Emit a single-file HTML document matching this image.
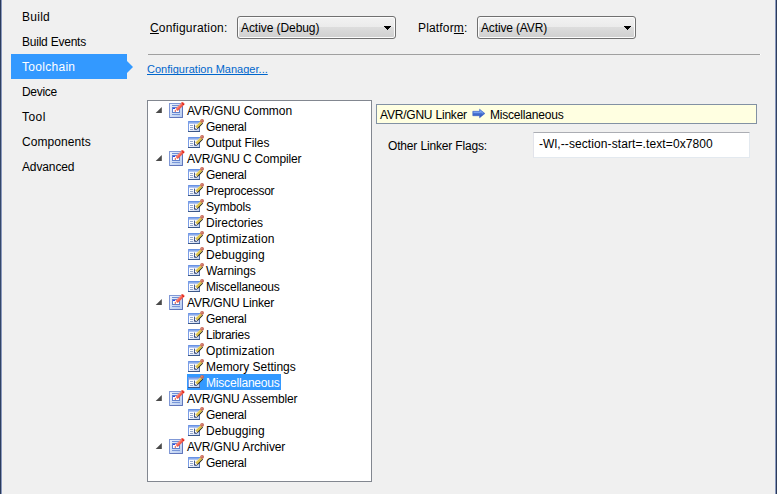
<!DOCTYPE html><html><head><meta charset="utf-8"><title>Toolchain</title><style>
html,body{margin:0;padding:0}
body{width:777px;height:494px;background:#f0f0f0;position:relative;overflow:hidden;font-family:"Liberation Sans",sans-serif;font-size:12px;color:#000;line-height:16px}
.t{position:absolute;white-space:nowrap;height:16px;line-height:16px;text-decoration-skip-ink:none}
.e{position:absolute;top:0;width:1px;height:494px}
.sel{position:absolute;left:11px;top:54px;width:116px;height:25px;background:#3399ff}
.arrow{position:absolute;left:127px;top:61px;width:0;height:0;border-left:6px solid #3399ff;border-top:6px solid transparent;border-bottom:6px solid transparent}
.combo{position:absolute;top:16px;height:21px;width:157px;border:1px solid #707070;border-radius:3px;background:linear-gradient(#f2f2f2 0%,#ebebeb 47.6%,#dddddd 47.6%,#cfcfcf 100%);box-shadow:inset 0 0 0 1px #fcfcfc}
.combo svg{position:absolute;left:146px;top:9px}
.hr{position:absolute;left:148px;top:54px;width:612px;height:1px;background:#a0a0a0}
.treebox{position:absolute;left:147px;top:100px;width:223px;height:380px;border:1px solid #828790;background:#fff}
.hdr{position:absolute;left:376px;top:104px;width:379px;height:18px;border:1px solid #8291a3;background:#ffffe1}
.input{position:absolute;left:533px;top:132px;width:215px;height:24px;border:1px solid #e3e9ef;border-top-color:#abadb3;border-left-color:#e2e3ea;background:#fff}
.selrow{position:absolute;background:#3399ff}
.ic{position:absolute}
</style></head><body>
<div class="e" style="left:0;background:linear-gradient(#2a3a5a,#35486a 40%,#35486a 60%,#2a3a5a)"></div><div class="e" style="left:1px;background:#8a99be"></div><div class="e" style="left:2px;background:#f2f1ef"></div>
<div class="e" style="left:776px;background:linear-gradient(#2a3a5a,#35486a 40%,#35486a 60%,#2a3a5a)"></div><div class="e" style="left:775px;background:#8a99be"></div><div class="e" style="left:774px;background:#f2f1ef"></div>
<div class="sel"></div><div class="arrow"></div>
<div class="combo" style="left:237px"><svg width="7" height="4" viewBox="0 0 7 4" shape-rendering="crispEdges"><path d="M0 0h7v1h-1v1h-1v1h-1v1h-1v-1h-1v-1h-1v-1h-1z" fill="#000"/></svg></div>
<div class="combo" style="left:477px"><svg width="7" height="4" viewBox="0 0 7 4" shape-rendering="crispEdges"><path d="M0 0h7v1h-1v1h-1v1h-1v1h-1v-1h-1v-1h-1v-1h-1z" fill="#000"/></svg></div>
<div class="hr"></div><div style="position:absolute;left:760px;top:54px;width:1px;height:1px;background:#fff"></div>
<div class="treebox"></div>
<div class="hdr"></div>
<div class="input"></div>
<div class="selrow" style="left:187px;top:374px;width:94px;height:16px"></div>
<svg class="ic" style="left:155px;top:102px" width="8" height="16" viewBox="0 0 8 16"><path d="M.7 11L6.8 4.9V11z" fill="#4a4a4a"/></svg>
<svg class="ic" style="left:168px;top:102px" width="18" height="16" viewBox="0 0 18 16"><use href="#pi"/></svg>
<svg class="ic" style="left:187px;top:118px" width="18" height="16" viewBox="0 0 18 16"><use href="#ci"/></svg>
<svg class="ic" style="left:187px;top:134px" width="18" height="16" viewBox="0 0 18 16"><use href="#ci"/></svg>
<svg class="ic" style="left:155px;top:150px" width="8" height="16" viewBox="0 0 8 16"><path d="M.7 11L6.8 4.9V11z" fill="#4a4a4a"/></svg>
<svg class="ic" style="left:168px;top:150px" width="18" height="16" viewBox="0 0 18 16"><use href="#pi"/></svg>
<svg class="ic" style="left:187px;top:166px" width="18" height="16" viewBox="0 0 18 16"><use href="#ci"/></svg>
<svg class="ic" style="left:187px;top:182px" width="18" height="16" viewBox="0 0 18 16"><use href="#ci"/></svg>
<svg class="ic" style="left:187px;top:198px" width="18" height="16" viewBox="0 0 18 16"><use href="#ci"/></svg>
<svg class="ic" style="left:187px;top:214px" width="18" height="16" viewBox="0 0 18 16"><use href="#ci"/></svg>
<svg class="ic" style="left:187px;top:230px" width="18" height="16" viewBox="0 0 18 16"><use href="#ci"/></svg>
<svg class="ic" style="left:187px;top:246px" width="18" height="16" viewBox="0 0 18 16"><use href="#ci"/></svg>
<svg class="ic" style="left:187px;top:262px" width="18" height="16" viewBox="0 0 18 16"><use href="#ci"/></svg>
<svg class="ic" style="left:187px;top:278px" width="18" height="16" viewBox="0 0 18 16"><use href="#ci"/></svg>
<svg class="ic" style="left:155px;top:294px" width="8" height="16" viewBox="0 0 8 16"><path d="M.7 11L6.8 4.9V11z" fill="#4a4a4a"/></svg>
<svg class="ic" style="left:168px;top:294px" width="18" height="16" viewBox="0 0 18 16"><use href="#pi"/></svg>
<svg class="ic" style="left:187px;top:310px" width="18" height="16" viewBox="0 0 18 16"><use href="#ci"/></svg>
<svg class="ic" style="left:187px;top:326px" width="18" height="16" viewBox="0 0 18 16"><use href="#ci"/></svg>
<svg class="ic" style="left:187px;top:342px" width="18" height="16" viewBox="0 0 18 16"><use href="#ci"/></svg>
<svg class="ic" style="left:187px;top:358px" width="18" height="16" viewBox="0 0 18 16"><use href="#ci"/></svg>
<svg class="ic" style="left:187px;top:374px" width="18" height="16" viewBox="0 0 18 16"><use href="#ci"/></svg>
<svg class="ic" style="left:155px;top:390px" width="8" height="16" viewBox="0 0 8 16"><path d="M.7 11L6.8 4.9V11z" fill="#4a4a4a"/></svg>
<svg class="ic" style="left:168px;top:390px" width="18" height="16" viewBox="0 0 18 16"><use href="#pi"/></svg>
<svg class="ic" style="left:187px;top:406px" width="18" height="16" viewBox="0 0 18 16"><use href="#ci"/></svg>
<svg class="ic" style="left:187px;top:422px" width="18" height="16" viewBox="0 0 18 16"><use href="#ci"/></svg>
<svg class="ic" style="left:155px;top:438px" width="8" height="16" viewBox="0 0 8 16"><path d="M.7 11L6.8 4.9V11z" fill="#4a4a4a"/></svg>
<svg class="ic" style="left:168px;top:438px" width="18" height="16" viewBox="0 0 18 16"><use href="#pi"/></svg>
<svg class="ic" style="left:187px;top:454px" width="18" height="16" viewBox="0 0 18 16"><use href="#ci"/></svg>
<div class="t" style="left:22px;top:9px;letter-spacing:0.275px">Build</div>
<div class="t" style="left:22px;top:34px;letter-spacing:-0.227px">Build Events</div>
<div class="t" style="left:22px;top:59px;color:#fff;letter-spacing:0.288px">Toolchain</div>
<div class="t" style="left:22px;top:84px;letter-spacing:-0.32px">Device</div>
<div class="t" style="left:22px;top:109px;letter-spacing:0.433px">Tool</div>
<div class="t" style="left:22px;top:134px;letter-spacing:0.067px">Components</div>
<div class="t" style="left:22px;top:159px;letter-spacing:-0.129px">Advanced</div>
<div class="t" style="left:150px;top:20px;letter-spacing:0.192px"><u>C</u>onfiguration:</div>
<div class="t" style="left:241px;top:20px;letter-spacing:-0.069px">Active (Debug)</div>
<div class="t" style="left:418px;top:20px;letter-spacing:0.163px">Platfor<u>m</u>:</div>
<div class="t" style="left:481px;top:20px;letter-spacing:-0.145px">Active (AVR)</div>
<div class="t" style="left:147px;top:61px;color:#0066cc;font-size:11px;letter-spacing:0.013px;text-decoration:underline">Configuration Manager...</div>
<div class="t" style="left:187px;top:103px;letter-spacing:-0.054px">AVR/GNU Common</div>
<div class="t" style="left:206px;top:119px;letter-spacing:-0.35px">General</div>
<div class="t" style="left:206px;top:135px;letter-spacing:-0.118px">Output Files</div>
<div class="t" style="left:187px;top:151px;letter-spacing:-0.153px">AVR/GNU C Compiler</div>
<div class="t" style="left:206px;top:167px;letter-spacing:-0.35px">General</div>
<div class="t" style="left:206px;top:183px;letter-spacing:-0.255px">Preprocessor</div>
<div class="t" style="left:206px;top:199px;letter-spacing:-0.15px">Symbols</div>
<div class="t" style="left:206px;top:215px;letter-spacing:-0.03px">Directories</div>
<div class="t" style="left:206px;top:231px;letter-spacing:0.155px">Optimization</div>
<div class="t" style="left:206px;top:247px;letter-spacing:0.087px">Debugging</div>
<div class="t" style="left:206px;top:263px;letter-spacing:-0.057px">Warnings</div>
<div class="t" style="left:206px;top:279px;letter-spacing:-0.183px">Miscellaneous</div>
<div class="t" style="left:187px;top:295px;letter-spacing:-0.192px">AVR/GNU Linker</div>
<div class="t" style="left:206px;top:311px;letter-spacing:-0.35px">General</div>
<div class="t" style="left:206px;top:327px;letter-spacing:-0.263px">Libraries</div>
<div class="t" style="left:206px;top:343px;letter-spacing:0.155px">Optimization</div>
<div class="t" style="left:206px;top:359px;letter-spacing:-0.021px">Memory Settings</div>
<div class="t" style="left:206px;top:375px;color:#fff;letter-spacing:-0.183px">Miscellaneous</div>
<div class="t" style="left:187px;top:391px;letter-spacing:-0.169px">AVR/GNU Assembler</div>
<div class="t" style="left:206px;top:407px;letter-spacing:-0.35px">General</div>
<div class="t" style="left:206px;top:423px;letter-spacing:0.087px">Debugging</div>
<div class="t" style="left:187px;top:439px;letter-spacing:-0.147px">AVR/GNU Archiver</div>
<div class="t" style="left:206px;top:455px;letter-spacing:-0.35px">General</div>
<div class="t" style="left:380px;top:107px;letter-spacing:-0.208px">AVR/GNU Linker</div>
<div class="t" style="left:490px;top:107px;letter-spacing:-0.2px">Miscellaneous</div>
<div class="t" style="left:388px;top:138px;letter-spacing:-0.161px">Other Linker Flags:</div>
<div class="t" style="left:539px;top:136px;letter-spacing:0.097px">-Wl,--section-start=.text=0x7800</div>
<svg class="ic" style="left:471px;top:108px" width="15" height="11" viewBox="0 0 15 11"><defs><linearGradient id="ag" x1="0" y1="0" x2="0" y2="1"><stop offset="0" stop-color="#6fa0f4"/><stop offset="1" stop-color="#2448b0"/></linearGradient></defs><path d="M1.8 3.3H8.6V1.2L13.9 5.5L8.6 9.8V7.7H1.8z" fill="url(#ag)" stroke="#3a62c8" stroke-width=".6"/><path d="M2.6 4.4H9.4V3.2L12 5.3" stroke="#8db4fa" stroke-width=".9" fill="none" opacity=".8"/></svg>
<svg width="0" height="0" style="position:absolute"><defs>
<linearGradient id="g1" x1="0" y1="0" x2="1" y2="1"><stop offset="0" stop-color="#eef4fd"/><stop offset="1" stop-color="#b4c9ef"/></linearGradient>
<linearGradient id="g2" x1="0" y1="0" x2="0" y2="1"><stop offset="0" stop-color="#5585e2"/><stop offset="1" stop-color="#c2d3f6"/></linearGradient>
<linearGradient id="g3" x1="0" y1="0" x2="1" y2="1"><stop offset="0" stop-color="#ffffff"/><stop offset=".45" stop-color="#fbfcff"/><stop offset="1" stop-color="#b4c8ef"/></linearGradient>
<linearGradient id="g4" x1="0" y1="0" x2="1" y2="1"><stop offset="0" stop-color="#ff9484"/><stop offset="1" stop-color="#e83020"/></linearGradient>
<g id="pi">
<rect x="1.5" y="1.5" width="13" height="14" fill="url(#g1)" stroke="#8098d6"/><path d="M14.5 2V15.5H2" stroke="#6076bc" fill="none"/>
<path d="M4 3.5H11" stroke="#6f8fd6"/>
<rect x="4.5" y="5.5" width="7" height="5" fill="#fff" stroke="#6080cc"/>
<rect x="5" y="6" width="2" height="1" fill="#2244ee"/>
<path d="M4 12.5H12" stroke="#7896d8"/>
<path d="M7 9.2L8.2 6.6L9.9 8.3z" fill="#f6e6d8"/>
<path d="M8.6 7.9L15.7 .8" stroke="url(#g4)" stroke-width="3.2" stroke-linecap="butt"/><path d="M13.6 .6L15.9 2.9" stroke="#dc1c10" stroke-width="1.2"/>
<path d="M8.2 7.2L14.6 .8" stroke="#ffb0a4" stroke-width=".8" opacity=".7"/>
<circle cx="7.3" cy="9" r=".7" fill="#d02010"/>
</g>
<g id="ci">
<rect x="1" y="3" width="12" height="11" fill="url(#g3)"/>
<rect x="1" y="3" width="12" height="3" fill="url(#g2)"/>
<path d="M1.5 3V14" stroke="#7a9de6"/>
<path d="M12.5 5V14" stroke="#5675b0"/>
<path d="M1 13.5H13" stroke="#3b5788"/>
<path d="M3 7.5H6M3 9.5H6M3 11.5H6" stroke="#93a7cc"/>
<path d="M7.5 6.6V11.3H10.2" stroke="#42578a" fill="none" stroke-width="1"/>
<path d="M8 10.8V8.3L9.7 7.3L11.2 9L10.3 10.8z" fill="#fff"/>
<path d="M10.1 10.5L15.5 5.1" stroke="#1c1c1c" stroke-width="1.4"/>
<path d="M9.3 9.2L14.6 3.9" stroke="#e8cd52" stroke-width="2.7"/>
<path d="M9 8.2L13.7 3.5" stroke="#fff6b8" stroke-width=".8" opacity=".85"/>
<path d="M9.3 9.2L14.6 3.9" stroke="#7a6418" stroke-width="2.7" stroke-dasharray=".45 1.25" opacity=".4"/>
<circle cx="15.1" cy="2.8" r="1.9" fill="#c46555"/><circle cx="14.8" cy="2.5" r=".9" fill="#da8878"/>
<circle cx="8.1" cy="10.7" r=".55" fill="#222"/>
</g>
</defs></svg>
</body></html>
